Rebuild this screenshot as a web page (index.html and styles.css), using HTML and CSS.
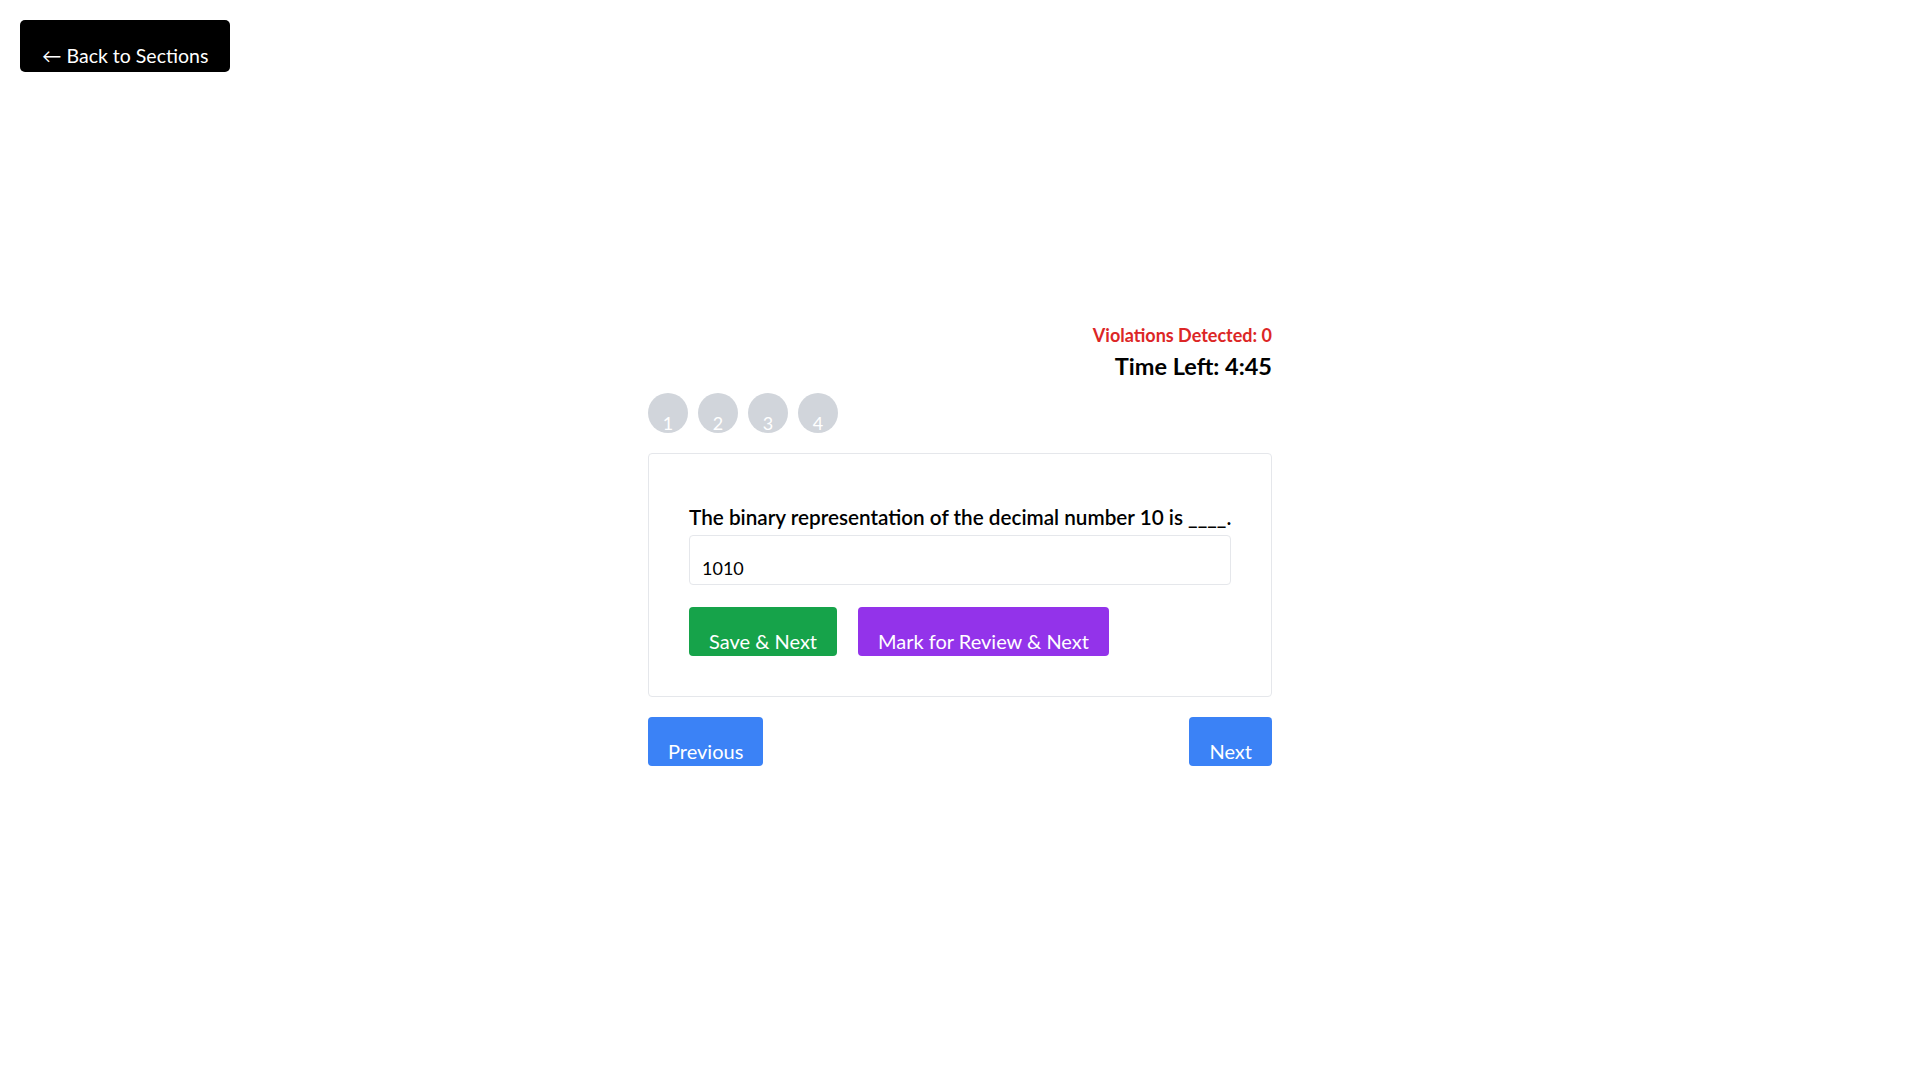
FILE: index.html
```html
<!DOCTYPE html>
<html lang="en">
<head>
<meta charset="utf-8">
<title>Quiz</title>
<link rel="stylesheet" href="styles.css">
</head>
<body>
<div class="page">
  <header class="topbar">
    <button class="back-btn">← Back to Sections</button>
  </header>
  <main class="quiz">
    <div class="status">
      <div class="violations">Violations Detected: 0</div>
      <div class="timer">Time Left: 4:45</div>
    </div>
    <div class="palette">
      <span class="dot">1</span>
      <span class="dot">2</span>
      <span class="dot">3</span>
      <span class="dot">4</span>
    </div>
    <section class="card">
      <p class="question">The binary representation of the decimal number 10 is ____.</p>
      <input class="answer" type="text" value="1010">
      <div class="actions">
        <button class="btn btn-green">Save &amp; Next</button>
        <button class="btn btn-purple">Mark for Review &amp; Next</button>
      </div>
    </section>
    <nav class="nav">
      <button class="btn btn-blue">Previous</button>
      <button class="btn btn-blue">Next</button>
    </nav>
  </main>
</div>
</body>
</html>
```
FILE: styles.css
```css
* { box-sizing: border-box; }
html, body { margin: 0; padding: 0; background: #fff; }
body {
  font-family: Lato, "Open Sans", "DejaVu Sans", sans-serif;
  color: #000;
}
.page { padding: 20px; }
.topbar { display: flex; }
.back-btn {
  font-family: inherit;
  font-size: 19.5px;
  line-height: 20px;
  color: #fff;
  background: #000;
  border: 0;
  border-radius: 5px;
  padding: 26px 22px 6px;
  height: 52px;
}
.quiz {
  width: 624px;
  margin: 251px auto 0;
}
.status { text-align: right; }
.violations {
  color: #dc2626;
  font-weight: 700;
  font-size: 18px;
  line-height: 24px;
}
.timer {
  margin-top: 5px;
  font-weight: 700;
  font-size: 23.5px;
  line-height: 28px;
}
.palette {
  display: flex;
  gap: 10px;
  margin-top: 13px;
}
.dot {
  width: 40px;
  height: 40px;
  border-radius: 50%;
  background: #d1d5db;
  color: #fff;
  font-size: 18px;
  line-height: 18px;
  text-align: center;
  padding-top: 21px;
}
.card {
  margin-top: 20px;
  border: 1px solid #e5e7eb;
  border-radius: 4px;
  padding: 49px 40px 40px;
}
.question {
  margin: 0;
  font-size: 20.7px;
  line-height: 28px;
  font-weight: 600;
  white-space: nowrap;
}
.answer {
  display: block;
  width: 100%;
  margin-top: 4px;
  font-family: inherit;
  font-size: 18px;
  line-height: 18px;
  color: #000;
  border: 1px solid #e5e7eb;
  border-radius: 4px;
  padding: 23px 12px 7px;
  height: 50px;
  outline: none;
}
.actions {
  display: flex;
  gap: 21px;
  margin-top: 22px;
}
.btn {
  font-family: inherit;
  font-size: 20px;
  line-height: 20px;
  color: #fff;
  border: 0;
  border-radius: 4px;
  padding: 24px 20px 5px;
  height: 49px;
}
.btn-green { background: #16a34a; }
.btn-purple { background: #9333ea; }
.btn-blue { background: #3b82f6; }
.nav {
  display: flex;
  justify-content: space-between;
  margin-top: 20px;
}
```
